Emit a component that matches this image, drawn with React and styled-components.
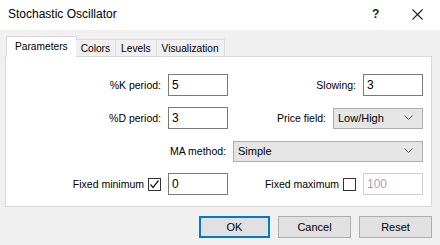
import { createGlobalStyle, styled } from 'styled-components'

const Global = createGlobalStyle`
  html, body {
    margin: 0;
    padding: 0;
    background: #f0f0f0;
  }
  body {
    font-family: 'Liberation Sans', Arial, sans-serif;
    font-size: 10.5px;
    color: #000;
  }
`

const Chevron = () => (
  <svg width='9' height='6' viewBox='0 0 9 6'>
    <polyline points='0.5,0.5 4.5,4.5 8.5,0.5' fill='none' stroke='#555' strokeWidth='1' />
  </svg>
)

const Tick = () => (
  <svg width='11' height='11' viewBox='0 0 11 11'>
    <polyline points='1.5,5.5 4,8.5 9.5,1.5' fill='none' stroke='#222' strokeWidth='1.3' />
  </svg>
)

const App = () => {
  return (
    <Window>
      <Global />
      <TitleBar>
        <Title>Stochastic Oscillator</Title>
        <Help>?</Help>
        <Close>
          <svg width='11' height='11' viewBox='0 0 11 11'>
            <path d='M0.5 0.5 L10.5 10.5 M10.5 0.5 L0.5 10.5' stroke='#222' strokeWidth='1.1' />
          </svg>
        </Close>
      </TitleBar>
      <Body>
        <Tabs>
          <Tab $active>Parameters</Tab>
          <Tab>Colors</Tab>
          <Tab>Levels</Tab>
          <Tab>Visualization</Tab>
        </Tabs>
        <Panel>
          <Row $cols='162px 60px 1fr 60px'>
            <Label>%K period:</Label>
            <Input>5</Input>
            <Label>Slowing:</Label>
            <Input>3</Input>
          </Row>
          <Row $cols='162px 60px 1fr 90px'>
            <Label>%D period:</Label>
            <Input>3</Input>
            <Label>Price field:</Label>
            <Select>
              Low/High
              <Chevron />
            </Select>
          </Row>
          <Row $cols='227px 1fr'>
            <Label>MA method:</Label>
            <Select>
              Simple
              <Chevron />
            </Select>
          </Row>
          <Row $cols='162px 60px 1fr 60px'>
            <Label>
              Fixed minimum
              <Check>
                <Tick />
              </Check>
            </Label>
            <Input>0</Input>
            <Label>
              Fixed maximum
              <Check />
            </Label>
            <Input $disabled>100</Input>
          </Row>
        </Panel>
        <Buttons>
          <Button $primary>OK</Button>
          <Button>Cancel</Button>
          <Button>Reset</Button>
        </Buttons>
      </Body>
    </Window>
  )
}

export default App

const Window = styled.div`
  width: 440px;
  height: 245px;
  background: #f0f0f0;
  overflow: hidden;
`

const TitleBar = styled.div`
  height: 30px;
  background: #fff;
  display: flex;
  align-items: center;
  padding: 0 17px 0 8px;
`

const Title = styled.div`
  font-size: 12px;
  flex: 1;
  padding-bottom: 2px;
`

const Help = styled.div`
  font-size: 12px;
  font-weight: bold;
  color: #222;
  width: 40px;
  padding-bottom: 2px;
`

const Close = styled.div`
  display: flex;
  padding-bottom: 1px;
`

const Body = styled.div`
  padding: 6px 8px 0 5px;
`

const Tabs = styled.div`
  display: flex;
  align-items: flex-end;
  height: 21px;
  padding-left: 1px;
  position: relative;
  z-index: 1;
`

const Tab = styled.div`
  height: ${p => (p.$active ? '21px' : '18px')};
  padding: 0 ${p => (p.$active ? '8px' : '5px')};
  margin-right: ${p => (p.$active ? '-1px' : '0')};
  background: ${p => (p.$active ? '#fff' : '#f0f0f0')};
  border: 1px solid #d9d9d9;
  border-bottom: ${p => (p.$active ? '1px solid #fff' : '1px solid #d9d9d9')};
  border-left: ${p => (p.$active ? '1px solid #d9d9d9' : 'none')};
  box-sizing: border-box;
  display: flex;
  align-items: center;
  font-size: 10.2px;
  padding-bottom: 1px;
  padding-top: ${p => (p.$active ? '0' : '1px')};
`

const Panel = styled.div`
  margin-top: -1px;
  height: 151px;
  box-sizing: border-box;
  background: #fff;
  border: 1px solid #d9d9d9;
  padding: 17px 8px 0 0;
  display: flex;
  flex-direction: column;
  gap: 11px;
`

const Row = styled.div`
  display: grid;
  grid-template-columns: ${p => p.$cols};
  height: 22px;
  align-items: center;
`

const Label = styled.div`
  display: flex;
  align-items: center;
  justify-content: flex-end;
  gap: 4px;
  padding-right: 7px;
  white-space: nowrap;
`

const Input = styled.div`
  height: 22px;
  box-sizing: border-box;
  border: 1px solid ${p => (p.$disabled ? '#cfcfcf' : '#7a7a7a')};
  color: ${p => (p.$disabled ? '#a6a6a6' : '#000')};
  background: #fff;
  display: flex;
  align-items: center;
  padding-left: 3px;
  font-size: 12px;
`

const Select = styled.div`
  height: 21px;
  box-sizing: border-box;
  border: 1px solid #adadad;
  background: #e5e5e5;
  display: flex;
  align-items: center;
  justify-content: space-between;
  padding: 0 9px 0 4px;
  font-size: 11px;
`

const Check = styled.div`
  width: 13px;
  height: 13px;
  box-sizing: border-box;
  border: 1px solid #333;
  background: #fff;
  display: flex;
  align-items: center;
  justify-content: center;
`

const Buttons = styled.div`
  display: flex;
  justify-content: flex-end;
  gap: 8px;
  margin-top: 9px;
`

const Button = styled.div`
  width: ${p => (p.$primary ? '71px' : '73px')};
  height: 22px;
  box-sizing: border-box;
  border: ${p => (p.$primary ? '2px solid #0078d7' : '1px solid #adadad')};
  background: #e1e1e1;
  display: flex;
  align-items: center;
  justify-content: center;
  font-size: 11px;
`
